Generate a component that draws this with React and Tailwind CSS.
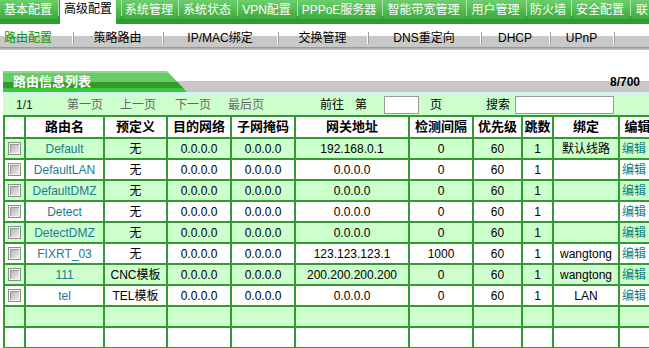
const TABS = [
  { label: '基本配置', w: 'w-[58px]' },
  { label: '高级配置', w: 'w-[62px]', active: true },
  { label: '系统管理', w: 'w-[56px]' },
  { label: '系统状态', w: 'w-[58px]' },
  { label: 'VPN配置', w: 'w-[59px]' },
  { label: 'PPPoE服务器', w: 'w-[84px]' },
  { label: '智能带宽管理', w: 'w-[83px]' },
  { label: '用户管理', w: 'w-[59px]' },
  { label: '防火墙', w: 'w-[44px]' },
  { label: '安全配置', w: 'w-[58px]' },
  { label: '联系我们', w: 'w-[60px]' },
]

const SUBNAV = [
  { label: '路由配置', w: 'w-[72px]', active: true },
  { label: '策略路由', w: 'w-[89px]' },
  { label: 'IP/MAC绑定', w: 'w-[114px]' },
  { label: '交换管理', w: 'w-[89px]' },
  { label: 'DNS重定向', w: 'w-[112px]' },
  { label: 'DHCP', w: 'w-[68px]' },
  { label: 'UPnP', w: 'w-[63px]' },
]

const COLS = [
  { title: '', w: 'w-[21px]' },
  { title: '路由名', w: 'w-[79px]' },
  { title: '预定义', w: 'w-[63px]' },
  { title: '目的网络', w: 'w-[64px]' },
  { title: '子网掩码', w: 'w-[64px]' },
  { title: '网关地址', w: 'w-[114px]' },
  { title: '检测间隔', w: 'w-[64px]' },
  { title: '优先级', w: 'w-[49px]' },
  { title: '跳数', w: 'w-[31px]' },
  { title: '绑定', w: 'w-[66px]' },
  { title: '编辑', w: 'w-[37px]' },
]

const ROUTES = [
  ['Default', '无', '0.0.0.0', '0.0.0.0', '192.168.0.1', '0', '60', '1', '默认线路'],
  ['DefaultLAN', '无', '0.0.0.0', '0.0.0.0', '0.0.0.0', '0', '60', '1', ''],
  ['DefaultDMZ', '无', '0.0.0.0', '0.0.0.0', '0.0.0.0', '0', '60', '1', ''],
  ['Detect', '无', '0.0.0.0', '0.0.0.0', '0.0.0.0', '0', '60', '1', ''],
  ['DetectDMZ', '无', '0.0.0.0', '0.0.0.0', '0.0.0.0', '0', '60', '1', ''],
  ['FIXRT_03', '无', '0.0.0.0', '0.0.0.0', '123.123.123.1', '1000', '60', '1', 'wangtong'],
  ['111', 'CNC模板', '0.0.0.0', '0.0.0.0', '200.200.200.200', '0', '60', '1', 'wangtong'],
  ['tel', 'TEL模板', '0.0.0.0', '0.0.0.0', '0.0.0.0', '0', '60', '1', 'LAN'],
]

const cell = 'border-2 border-[#339933] p-0 h-[21px] text-center whitespace-nowrap overflow-hidden'

function Checkbox() {
  return (
    <div className="mx-auto w-[13px] h-[13px] border border-[#8e8e8e] bg-[#f4f4f4] p-px">
      <div className="w-full h-full bg-gradient-to-br from-[#b8b8b8] to-[#ececec] border-t border-l border-[#9a9a9a]" />
    </div>
  )
}

export default function App() {
  const blank = Array.from({ length: 2 })

  return (
    <div className="w-[649px] h-[348px] overflow-hidden bg-white text-[12px] text-black font-['Liberation_Sans','Noto_Sans_CJK_SC',sans-serif]">
      {/* main tabs */}
      <div className="flex items-start h-[24px] bg-[#2f9c2f] whitespace-nowrap">
        {TABS.map((t, i) => (
          <div key={t.label} className="flex shrink-0">
            {t.active ? (
              <div className={`${t.w} shrink-0 flex h-[24px]`}>
                <div className="ml-px w-[56px] h-[24px] bg-white flex items-start justify-center pt-[3px] leading-[13px]">
                  {t.label}
                </div>
                <div className="flex-1 h-[19px] bg-gradient-to-b from-[#6ccf6c] to-[#3aab3a]" />
              </div>
            ) : (
              <div className={`${t.w} shrink-0 h-[19px] flex items-center justify-center pr-[2px] text-white bg-gradient-to-b from-[#6ccf6c] to-[#3aab3a]`}>
                {t.label}
              </div>
            )}
            {i < TABS.length - 1 && <div className="w-px h-[16px] shrink-0 bg-[#a9dfa9]" />}
          </div>
        ))}
      </div>

      {/* sub navigation */}
      <div className="flex items-center h-[26px] pt-[1px] whitespace-nowrap bg-[linear-gradient(to_bottom,#ffffff_0px,#ffffff_12px,#c8c8c8_12px,#c8c8c8_23px,#8c8c8c_23px,#a6a6a6_24px,#cfcfcf_26px)]">
        {SUBNAV.map((s) => (
          <div key={s.label} className="flex items-center shrink-0">
            <div className={`${s.w} shrink-0 flex ${s.active ? 'justify-start pl-[4px] text-[#0a9a0a]' : 'justify-center'}`}>
              {s.label}
            </div>
            <div className="w-px h-[12px] bg-white shadow-[1px_0_0_#9e9e9e]" />
          </div>
        ))}
      </div>

      {/* section title */}
      <div className="ml-[3px] mt-[21px] flex justify-between h-[21px] bg-[linear-gradient(to_bottom,#ffffff_0px,#ffffff_10px,#c8c8c8_10px,#c8c8c8_21px)]">
        <div className="w-[184px] h-[21px] pl-[10px] flex items-center font-bold text-[13px] text-white [clip-path:polygon(0_0,164px_0,184px_100%,0_100%)] bg-[linear-gradient(to_bottom,#8ad88a_0px,#8ad88a_2px,#66cc66_2px,#66cc66_11px,#339933_11px,#339933_17px,#33cc33_17px,#33cc33_21px)]">
          路由信息列表
        </div>
        <div className="pr-[9px] pt-[1px] flex items-center font-bold">8/700</div>
      </div>

      {/* pager */}
      <div className="ml-[3px] h-[3px] bg-[#d5f3ec]" />
      <div className="ml-[3px] h-[20px] bg-[#ccffcc] flex items-center whitespace-nowrap">
        <span className="w-[64px] pl-[13px] shrink-0 text-[#222]">1/1</span>
        <span className="w-[53px] shrink-0 text-[#666]">第一页</span>
        <span className="w-[55px] shrink-0 text-[#666]">上一页</span>
        <span className="w-[53px] shrink-0 text-[#666]">下一页</span>
        <span className="w-[92px] shrink-0 text-[#666]">最后页</span>
        <span className="w-[35px] shrink-0">前往</span>
        <span className="w-[29px] shrink-0">第</span>
        <div className="w-[35px] h-[18px] shrink-0 border border-[#9a9a9a] bg-white" />
        <span className="w-[67px] pl-[11px] shrink-0">页</span>
        <span className="w-[29px] shrink-0">搜索</span>
        <div className="w-[99px] h-[18px] shrink-0 border border-[#9a9a9a] bg-white" />
      </div>

      {/* route table */}
      <table className="ml-[3px] w-[652px] table-fixed border-collapse">
        <colgroup>
          {COLS.map((c, i) => (
            <col key={i} className={c.w} />
          ))}
        </colgroup>
        <thead>
          <tr className="bg-white">
            {COLS.map((c, i) => (
              <th key={i} className={`${cell} h-[22px] font-bold text-[13px]`}>
                {c.title}
              </th>
            ))}
          </tr>
        </thead>
        <tbody>
          {ROUTES.map((r, idx) => (
            <tr key={r[0]} className={idx % 2 === 0 ? 'bg-[#ccffcc]' : 'bg-white'}>
              <td className={cell}>
                <Checkbox />
              </td>
              <td className={`${cell} text-[#1b7b8e]`}>{r[0]}</td>
              {r.slice(1).map((v, j) => (
                <td key={j} className={cell}>
                  {v}
                </td>
              ))}
              <td className={`${cell} text-left pl-[2px] text-[#0b7d7e]`}>编辑</td>
            </tr>
          ))}
          {blank.map((_, idx) => (
            <tr key={`blank-${idx}`} className={idx % 2 === 0 ? 'bg-[#ccffcc]' : 'bg-white'}>
              {COLS.map((c, i) => (
                <td key={i} className={cell} />
              ))}
            </tr>
          ))}
        </tbody>
      </table>
    </div>
  )
}
